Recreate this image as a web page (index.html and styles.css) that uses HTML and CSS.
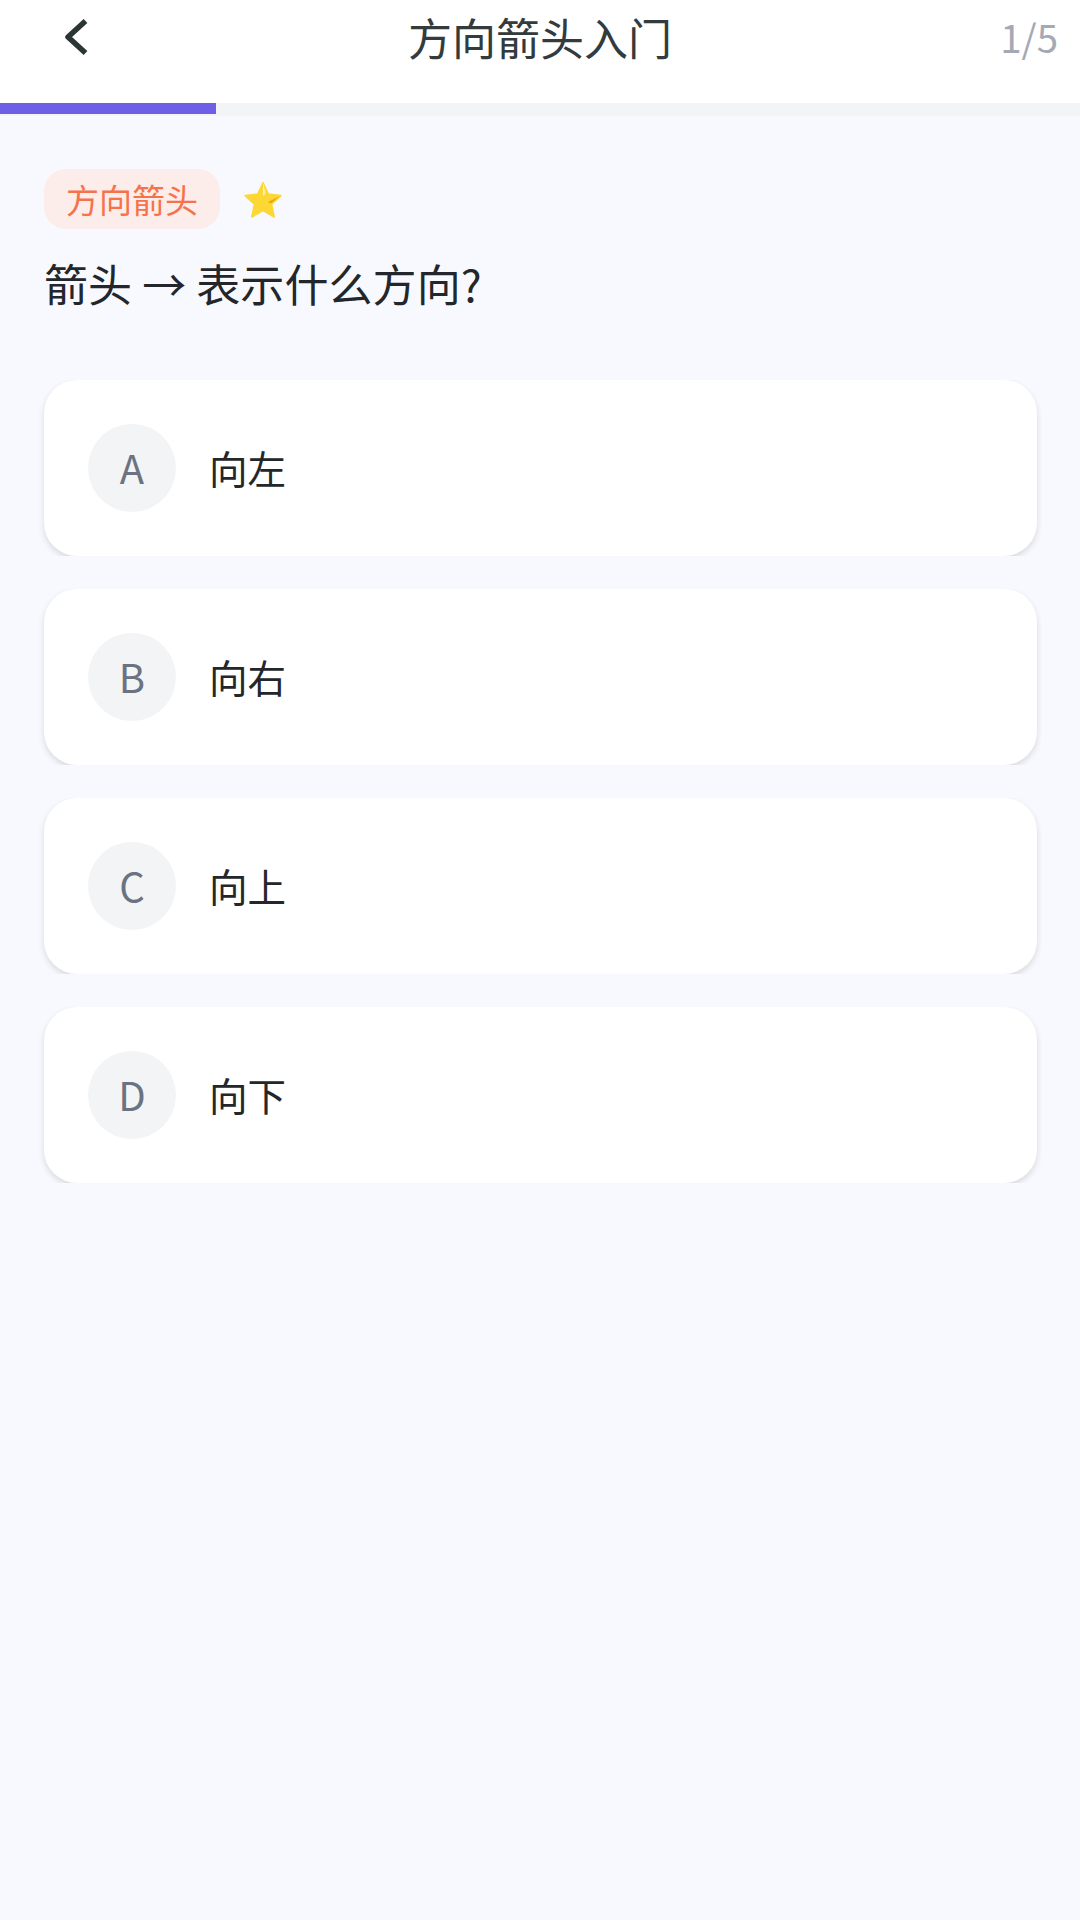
FILE: index.html
```html
<!DOCTYPE html>
<html lang="zh-CN">
<head>
<meta charset="utf-8">
<title>方向箭头入门</title>
<link rel="stylesheet" href="styles.css">
</head>
<body>
<header class="topbar">
  <button class="back" aria-label="返回">
    <svg class="back-icon" viewBox="0 0 28 44" width="28" height="44"><path d="M23.5 4 L6 20 L23.5 36" fill="none" stroke="#2b3533" stroke-width="5.5" stroke-linecap="butt" stroke-linejoin="round"/></svg>
  </button>
  <h1 class="title">方向箭头入门</h1>
  <span class="count">1/5</span>
</header>
<div class="track"><div class="fill"></div></div>
<main class="content">
  <div class="meta">
    <span class="tag">方向箭头</span>
    <svg class="star" viewBox="0 0 40 40" width="40" height="40">
      <path d="M20 2.5 L25.3 14 L38 15.6 L28.6 24.2 L31.2 37 L20 30.7 L8.8 37 L11.4 24.2 L2 15.6 L14.7 14 Z" fill="#fdd835" stroke="#fdd835" stroke-width="1.5" stroke-linejoin="round"/>
      <path d="M20 3 L22.6 13.5 L20 16 Z" fill="#fff3a8"/>
      <path d="M37 16 L28 23.5 L25 22 Z" fill="#e8a80c"/>
    </svg>
  </div>
  <p class="question">箭头 → 表示什么方向?</p>
  <ul class="options">
    <li class="option"><span class="letter">A</span><span class="label">向左</span></li>
    <li class="option"><span class="letter">B</span><span class="label">向右</span></li>
    <li class="option"><span class="letter">C</span><span class="label">向上</span></li>
    <li class="option"><span class="letter">D</span><span class="label">向下</span></li>
  </ul>
</main>
</body>
</html>
```
FILE: styles.css
```css
* { box-sizing: border-box; }
html, body { margin: 0; padding: 0; }
body {
  width: 1080px;
  height: 1920px;
  overflow: hidden;
  background: #f8f9fe;
  font-family: "Noto Sans CJK SC", "Noto Sans", sans-serif;
  display: flex;
  flex-direction: column;
}
.topbar {
  height: 103px;
  background: #fff;
  display: grid;
  grid-template-columns: 1fr auto 1fr;
  align-items: start;
  padding: 9px 22px 0;
}
.back {
  justify-self: start;
  width: 28px;
  height: 44px;
  margin: 8px 0 0 40px;
  padding: 0;
  border: 0;
  background: none;
  display: flex;
}
.title {
  margin: 0;
  font-size: 44px;
  line-height: 56px;
  font-weight: 400;
  color: #333b3c;
}
.count {
  justify-self: end;
  font-size: 38.5px;
  line-height: 54px;
  color: #a5a9b5;
}
.track { height: 13px; background: #f3f4f6; }
.fill { width: 216px; height: 11px; background: #6f5fe6; }
.content { padding: 53px 43.5px 0 44px; }
.meta { display: flex; align-items: center; gap: 23px; }
.star { margin-top: 2px; }
.tag {
  width: 176px;
  height: 60px;
  border-radius: 22px;
  background: #fcecea;
  color: #f5734a;
  font-size: 33px;
  line-height: 60px;
  text-align: center;
}
.question {
  margin: 24px 0 0;
  font-size: 44px;
  line-height: 60px;
  letter-spacing: .1px;
  color: #23272b;
}
.options {
  list-style: none;
  margin: 67px 0 0;
  padding: 0;
  display: flex;
  flex-direction: column;
  gap: 33px;
}
.option {
  height: 176px;
  padding: 0 44px;
  background: #fff;
  border-radius: 33px;
  display: flex;
  align-items: center;
  gap: 33px;
  box-shadow: 0 3px 6px rgba(0, 0, 0, .13);
  clip-path: inset(0 -6px 0 -6px);
}
.letter {
  width: 88px;
  height: 88px;
  border-radius: 50%;
  background: #f3f4f6;
  color: #6b7280;
  font-size: 40px;
  padding-bottom: 2px;
  display: flex;
  align-items: center;
  justify-content: center;
}
.label {
  font-size: 38.5px;
  line-height: 54px;
  margin-bottom: 2px;
  color: #23272b;
}
```
